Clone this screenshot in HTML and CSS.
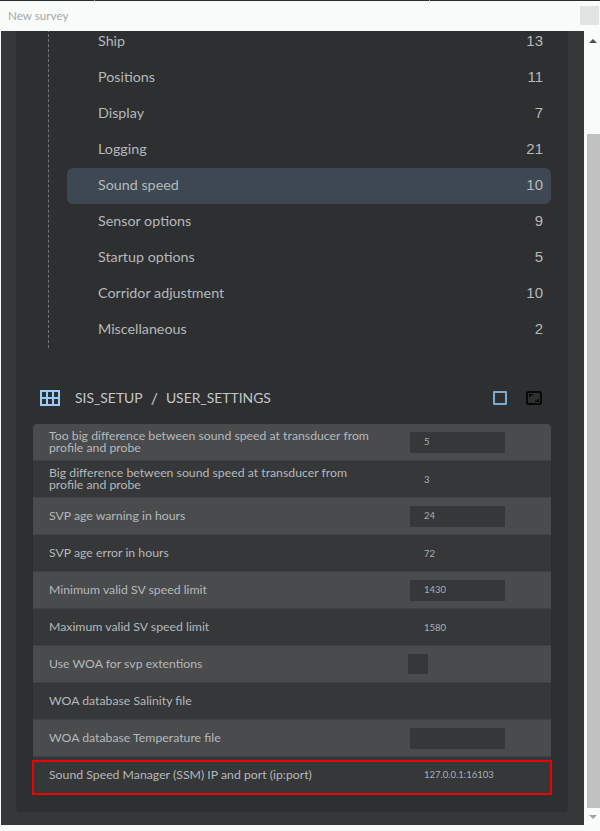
FILE: index.html
```html
<!DOCTYPE html>
<html lang="en">
<head>
<meta charset="utf-8">
<title>New survey</title>
<link rel="stylesheet" href="styles.css">
</head>
<body>
<div class="window">
  <span class="tick tick-a"></span>
  <span class="tick tick-b"></span>
  <header class="titlebar">
    <span class="title">New survey</span>
    <span class="title-btn"></span>
  </header>
  <div class="main">
    <div class="viewport">
      <div class="panel">
        <ul class="nav">
          <li class="nav-item"><span>Ship</span><span class="count">13</span></li>
          <li class="nav-item"><span>Positions</span><span class="count">11</span></li>
          <li class="nav-item"><span>Display</span><span class="count">7</span></li>
          <li class="nav-item"><span>Logging</span><span class="count">21</span></li>
          <li class="nav-item active"><span>Sound speed</span><span class="count">10</span></li>
          <li class="nav-item"><span>Sensor options</span><span class="count">9</span></li>
          <li class="nav-item"><span>Startup options</span><span class="count">5</span></li>
          <li class="nav-item"><span>Corridor adjustment</span><span class="count">10</span></li>
          <li class="nav-item"><span>Miscellaneous</span><span class="count">2</span></li>
        </ul>
        <div class="section-head">
          <svg class="grid-icon" width="20" height="16" viewBox="0 0 20 16"><path fill="none" stroke="#99ccf8" stroke-width="2" d="M1 1h18v14H1zM1 8h18M7 1v14M13 1v14"/></svg>
          <span class="crumb">SIS_SETUP</span>
          <span class="crumb slash">/</span>
          <span class="crumb">USER_SETTINGS</span>
          <span class="head-icons">
            <span class="icon-square"></span>
            <svg width="16" height="14" viewBox="0 0 16 14"><rect x="1" y="1" width="14" height="12" rx="1.500" fill="none" stroke="#080808" stroke-width="2"/><path fill="#080808" d="M3 3h4v1.500H4.500V6H3zM13 11H9V9.500h2.500V8H13z"/></svg>
          </span>
        </div>
        <div class="table">
          <div class="row odd first"><div class="label">Too big difference between sound speed at transducer from profile and probe</div><div class="value"><span class="input">5</span></div></div>
          <div class="row"><div class="label">Big difference between sound speed at transducer from profile and probe</div><div class="value"><span class="plain">3</span></div></div>
          <div class="row odd"><div class="label">SVP age warning in hours</div><div class="value"><span class="input">24</span></div></div>
          <div class="row"><div class="label">SVP age error in hours</div><div class="value"><span class="plain">72</span></div></div>
          <div class="row odd"><div class="label">Minimum valid SV speed limit</div><div class="value"><span class="input">1430</span></div></div>
          <div class="row"><div class="label">Maximum valid SV speed limit</div><div class="value"><span class="plain">1580</span></div></div>
          <div class="row odd"><div class="label">Use WOA for svp extentions</div><div class="value"><span class="check"></span></div></div>
          <div class="row"><div class="label">WOA database Salinity file</div><div class="value"></div></div>
          <div class="row odd"><div class="label">WOA database Temperature file</div><div class="value"><span class="input"></span></div></div>
          <div class="row last">
            <div class="label">Sound Speed Manager (SSM) IP and port (ip:port)</div><div class="value"><span class="plain">127.0.0.1:16103</span></div>
            <span class="highlight"></span>
          </div>
        </div>
      </div>
    </div>
    <div class="scrollbar">
      <span class="arrow up"></span>
      <span class="thumb"></span>
      <span class="arrow down"></span>
    </div>
  </div>
</div>
</body>
</html>
```
FILE: styles.css
```css
* { box-sizing: border-box; }
html, body { margin: 0; padding: 0; }
body {
  width: 600px;
  height: 831px;
  overflow: hidden;
  background: #f9fbfa;
  font-family: Lato, sans-serif;
}
.window { position: relative; display: flex; flex-direction: column; height: 831px; border-top: 1px solid #2b2b2b; }
.tick { position: absolute; top: -1px; width: 1px; height: 1px; background: #b5b5b5; }
.tick-a { left: 94px; }
.tick-b { left: 429px; }
.titlebar { height: 30px; flex: none; display: flex; align-items: center; justify-content: space-between; padding: 0 1px 2px 8px; }
.title { font-size: 11.700px; color: #a4a8a8; }
.title-btn { width: 19px; height: 19px; background: #e2e3e3; margin-top: 1px; }
.main { display: flex; height: 794px; }
.viewport { width: 583px; margin-left: 1px; background: #363739; padding: 0 15px 13px; flex: none; overflow: hidden; }
.panel { height: 781px; width: 552px; background: #2e2f31; border-radius: 0 0 5px 5px; overflow: hidden; }
.nav {
  list-style: none;
  margin: -7px 17px 0 32px;
  padding: 0;
  border-left: 1px dashed #70757a;
  height: 324px;
}
.nav-item {
  height: 36px;
  margin-left: 18px;
  padding: 0 8px 4px 31px;
  display: flex;
  align-items: center;
  justify-content: space-between;
  font-size: 14.300px;
  color: #b4b9bb;
}
.nav-item.active { background: #3e4852; border-radius: 6px; }
.count { font-family: "Liberation Sans", sans-serif; font-size: 15px; }
.section-head { display: flex; align-items: center; height: 20px; margin: 40px 0 0 24px; padding-right: 26px; color: #c4c8ca; font-size: 13.900px; }
.grid-icon { margin-right: 15px; }
.crumb { padding-bottom: 2px; }
.slash { margin: 0 8px; font-size: 16px; }
.head-icons { margin-left: auto; display: flex; align-items: center; gap: 19px; }
.icon-square { display: block; width: 14px; height: 14px; border: 2px solid #7dabd0; border-radius: 1px; }
.table { margin: 16px 0 0 17px; width: 518px; }
.row { position: relative; height: 37px; display: flex; align-items: center; background: #363739; border-bottom: 1px solid #404143; }
.row.odd { background: #4a4b4d; }
.row.first { border-radius: 4px 4px 0 0; }
.label { width: 360px; padding-left: 16px; padding-right: 20px; font-size: 12.270px; line-height: 12px; color: #b4b9bb; }
.value { display: flex; align-items: center; padding-left: 17px; }
.input { display: block; width: 95px; height: 21px; background: #363739; color: #aab0b4; font-size: 9.500px; line-height: 20px; padding-left: 14px; }
.plain { display: block; color: #aab0b4; font-size: 9.500px; padding-left: 14px; }
.check { display: block; width: 20px; height: 20px; background: #363739; margin-left: -2px; }
.row.last { border-bottom: 0; padding-bottom: 2px; }
.highlight { position: absolute; left: -1px; right: -1px; top: 3px; bottom: -1px; border: 2px solid #f00000; }
.scrollbar { width: 16px; margin-left: 1px; flex: none; display: flex; flex-direction: column; align-items: center; height: 794px; }
.thumb { display: block; width: 13px; height: 674px; background: #c1c1c1; margin-top: 103px; flex: none; }
.arrow { display: block; width: 0; height: 0; border-left: 4px solid transparent; border-right: 4px solid transparent; flex: none; position: absolute; }
.arrow.up { top: 38px; border-bottom: 4px solid #505050; }
.arrow.down { top: 814px; border-top: 4px solid #a3a3a3; }
```
